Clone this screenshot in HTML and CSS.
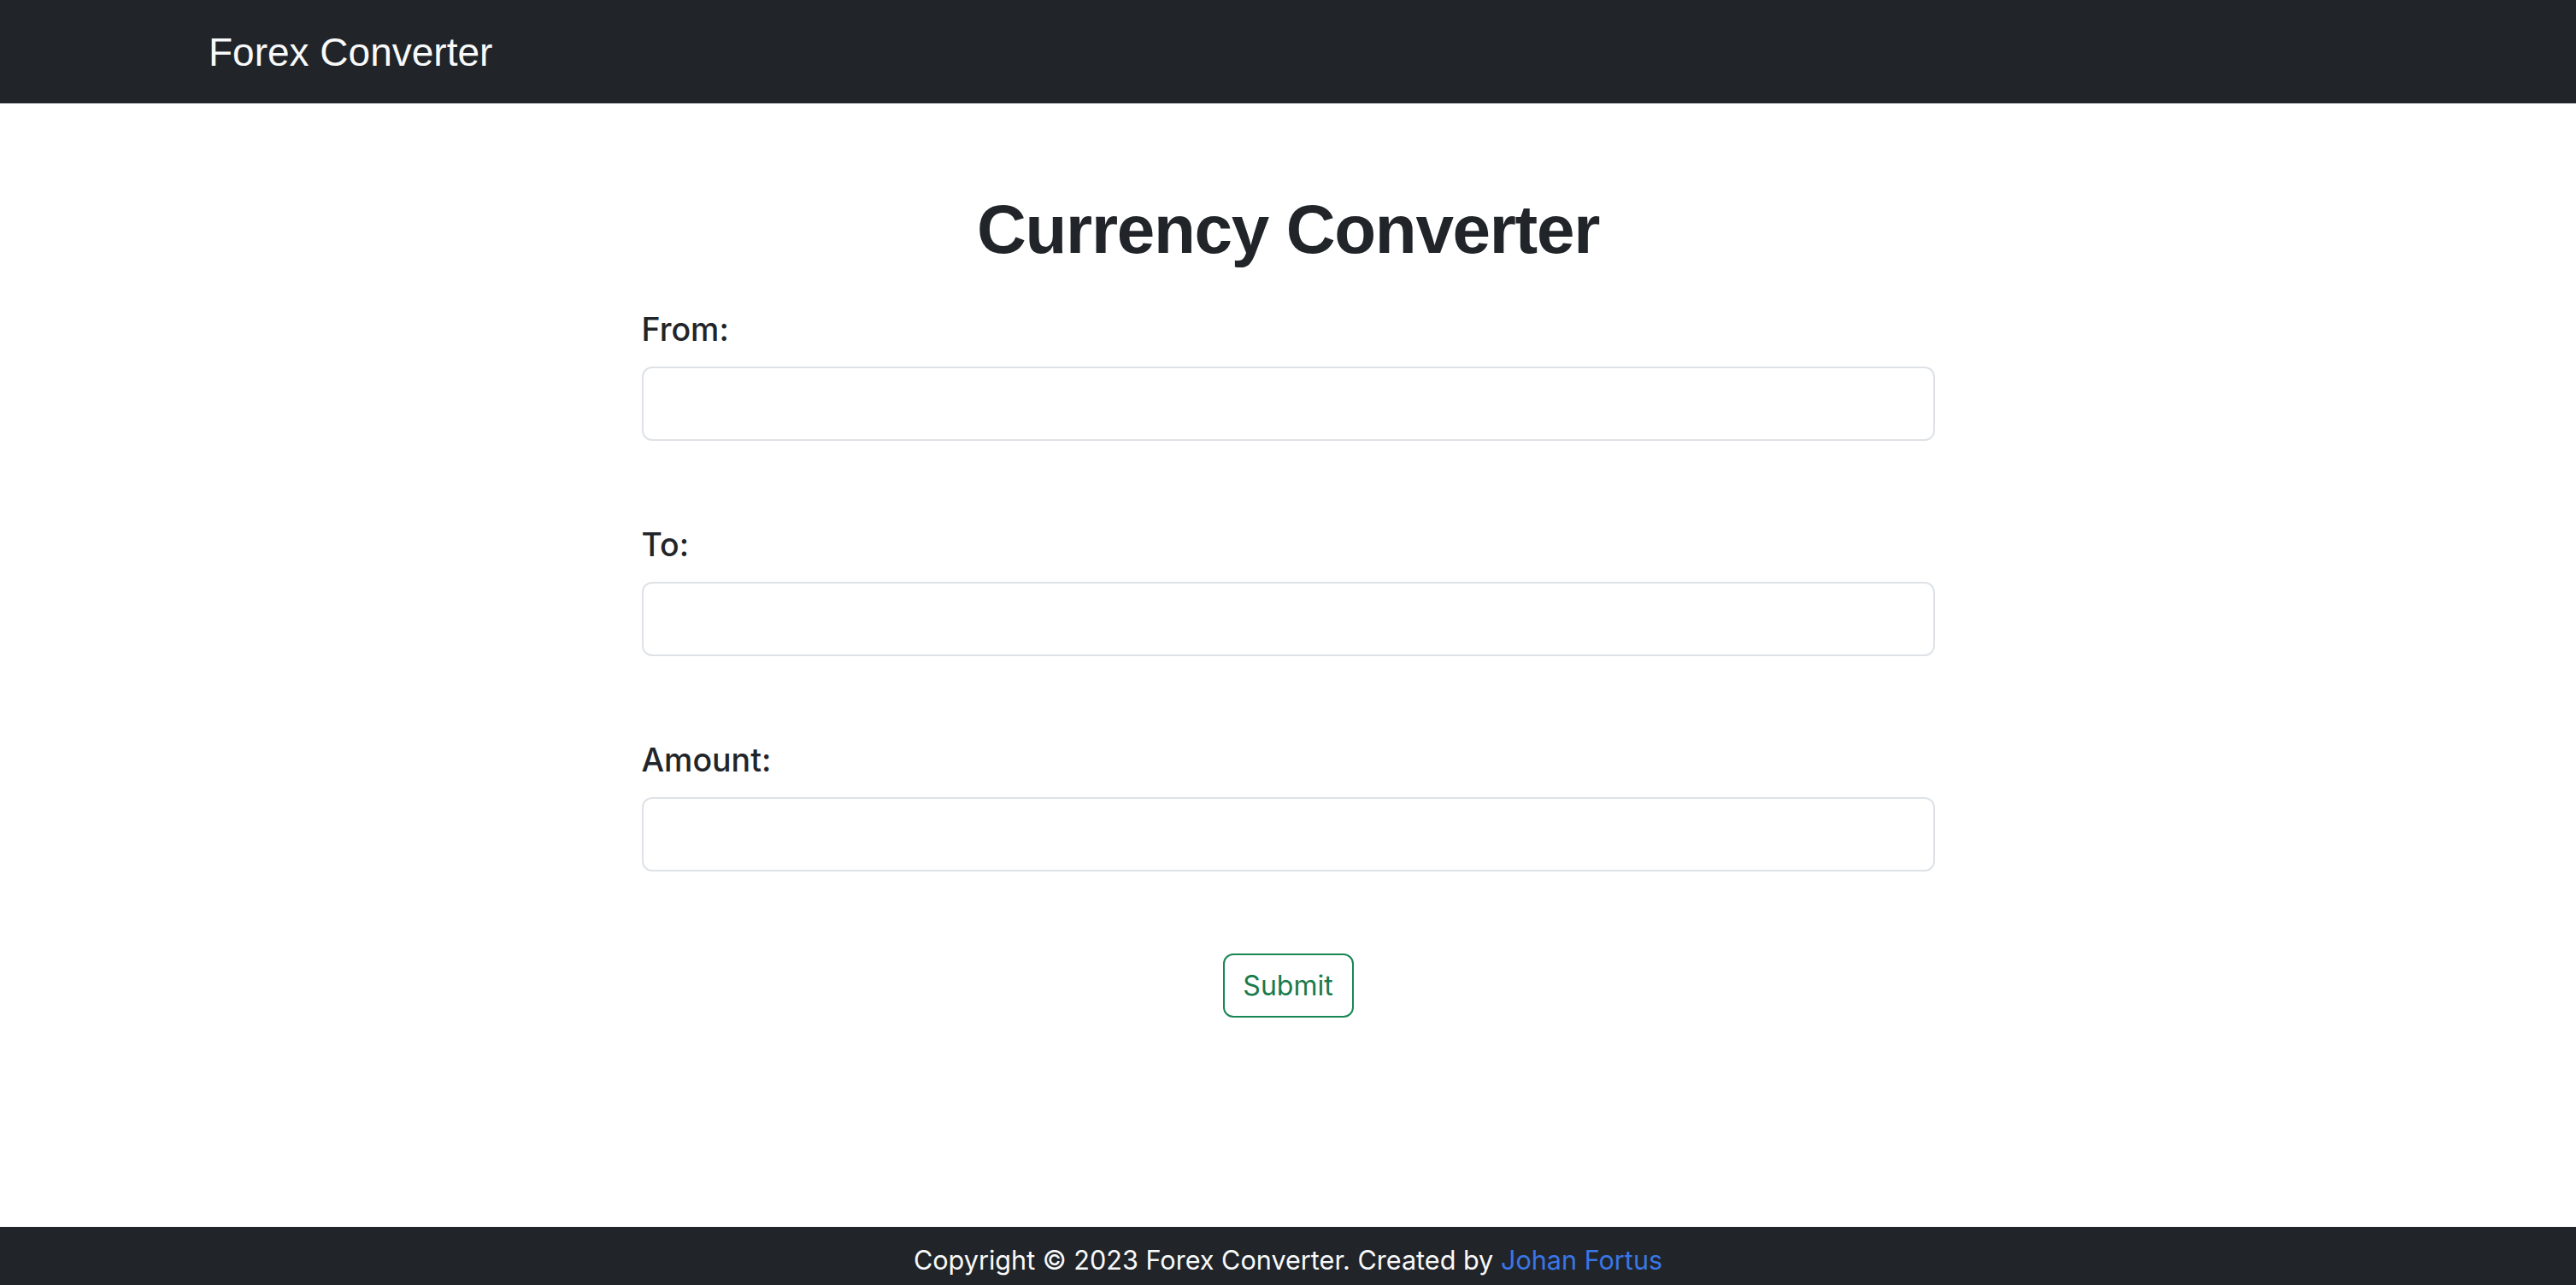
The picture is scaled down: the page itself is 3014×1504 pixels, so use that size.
FILE: index.html
```html
<!DOCTYPE html>
<html lang="en">
<head>
<meta charset="utf-8">
<title>Forex Converter</title>
<link rel="stylesheet" href="styles.css">
</head>
<body>
<div class="page">
  <nav class="navbar">
    <a class="brand" href="#">Forex Converter</a>
  </nav>
  <main class="main">
    <h1 class="title">Currency Converter</h1>
    <form class="form">
      <div class="field">
        <label class="label" for="from">From:</label>
        <input class="input" id="from" type="text">
      </div>
      <div class="field">
        <label class="label" for="to">To:</label>
        <input class="input" id="to" type="text">
      </div>
      <div class="field">
        <label class="label" for="amount">Amount:</label>
        <input class="input" id="amount" type="text">
      </div>
      <div class="actions">
        <button class="btn" type="button">Submit</button>
      </div>
    </form>
  </main>
  <footer class="footer">
    <p class="footer-text">Copyright © 2023 Forex Converter. Created by <a class="footer-link" href="#">Johan Fortus</a></p>
  </footer>
</div>
</body>
</html>
```

FILE: styles.css
```css
* { box-sizing: border-box; }
html, body { margin: 0; padding: 0; }
body {
  font-family: Inter, "Noto Sans", sans-serif;
  color: #212529;
  background: #fff;
}
.page {
  min-height: 1504px;
  display: flex;
  flex-direction: column;
}
.navbar {
  height: 121px;
  background: #212529;
  display: flex;
  align-items: center;
  padding-left: 244px;
  padding-top: 2px;
}
.brand {
  font-family: "Liberation Sans", Arial, sans-serif;
  font-size: 46px;
  color: #f8f9fa;
  text-decoration: none;
  line-height: 1.5;
}
.main {
  flex: 1;
  width: 1513px;
  margin: 0 auto;
  padding-top: 100px;
}
.title {
  margin: 0 0 42px;
  text-align: center;
  font-family: "Liberation Sans", Arial, sans-serif;
  font-weight: 700;
  font-size: 80px;
  line-height: 1.2;
  letter-spacing: -1.3px;
  color: #212529;
}
.form {
  display: flex;
  flex-direction: column;
}
.field {
  display: flex;
  flex-direction: column;
  gap: 16px;
  margin-bottom: 95px;
}
.label {
  font-size: 37.5px;
  line-height: 54px;
  font-weight: 500;
  color: #212529;
}
.input {
  height: 87px;
  border: 2px solid #dee2e6;
  border-radius: 12px;
  background: #fff;
  font-family: Inter, sans-serif;
  font-size: 36px;
  padding: 0 27px;
  outline: none;
}
.actions {
  display: flex;
  justify-content: center;
  margin-top: 1px;
}
.btn {
  width: 153px;
  height: 75px;
  border: 2px solid #198754;
  border-radius: 12px;
  background: #fff;
  color: #1a7a4a;
  font-family: Inter, sans-serif;
  font-size: 32px;
  padding: 0;
}
.footer {
  height: 68px;
  background: #212529;
  display: flex;
  align-items: flex-start;
  justify-content: center;
  padding-top: 16px;
}
.footer-text {
  margin: 0;
  font-size: 30.6px;
  line-height: 1.5;
  color: #f8f9fa;
}
.footer-link {
  color: #3a76e6;
  text-decoration: none;
}
```
